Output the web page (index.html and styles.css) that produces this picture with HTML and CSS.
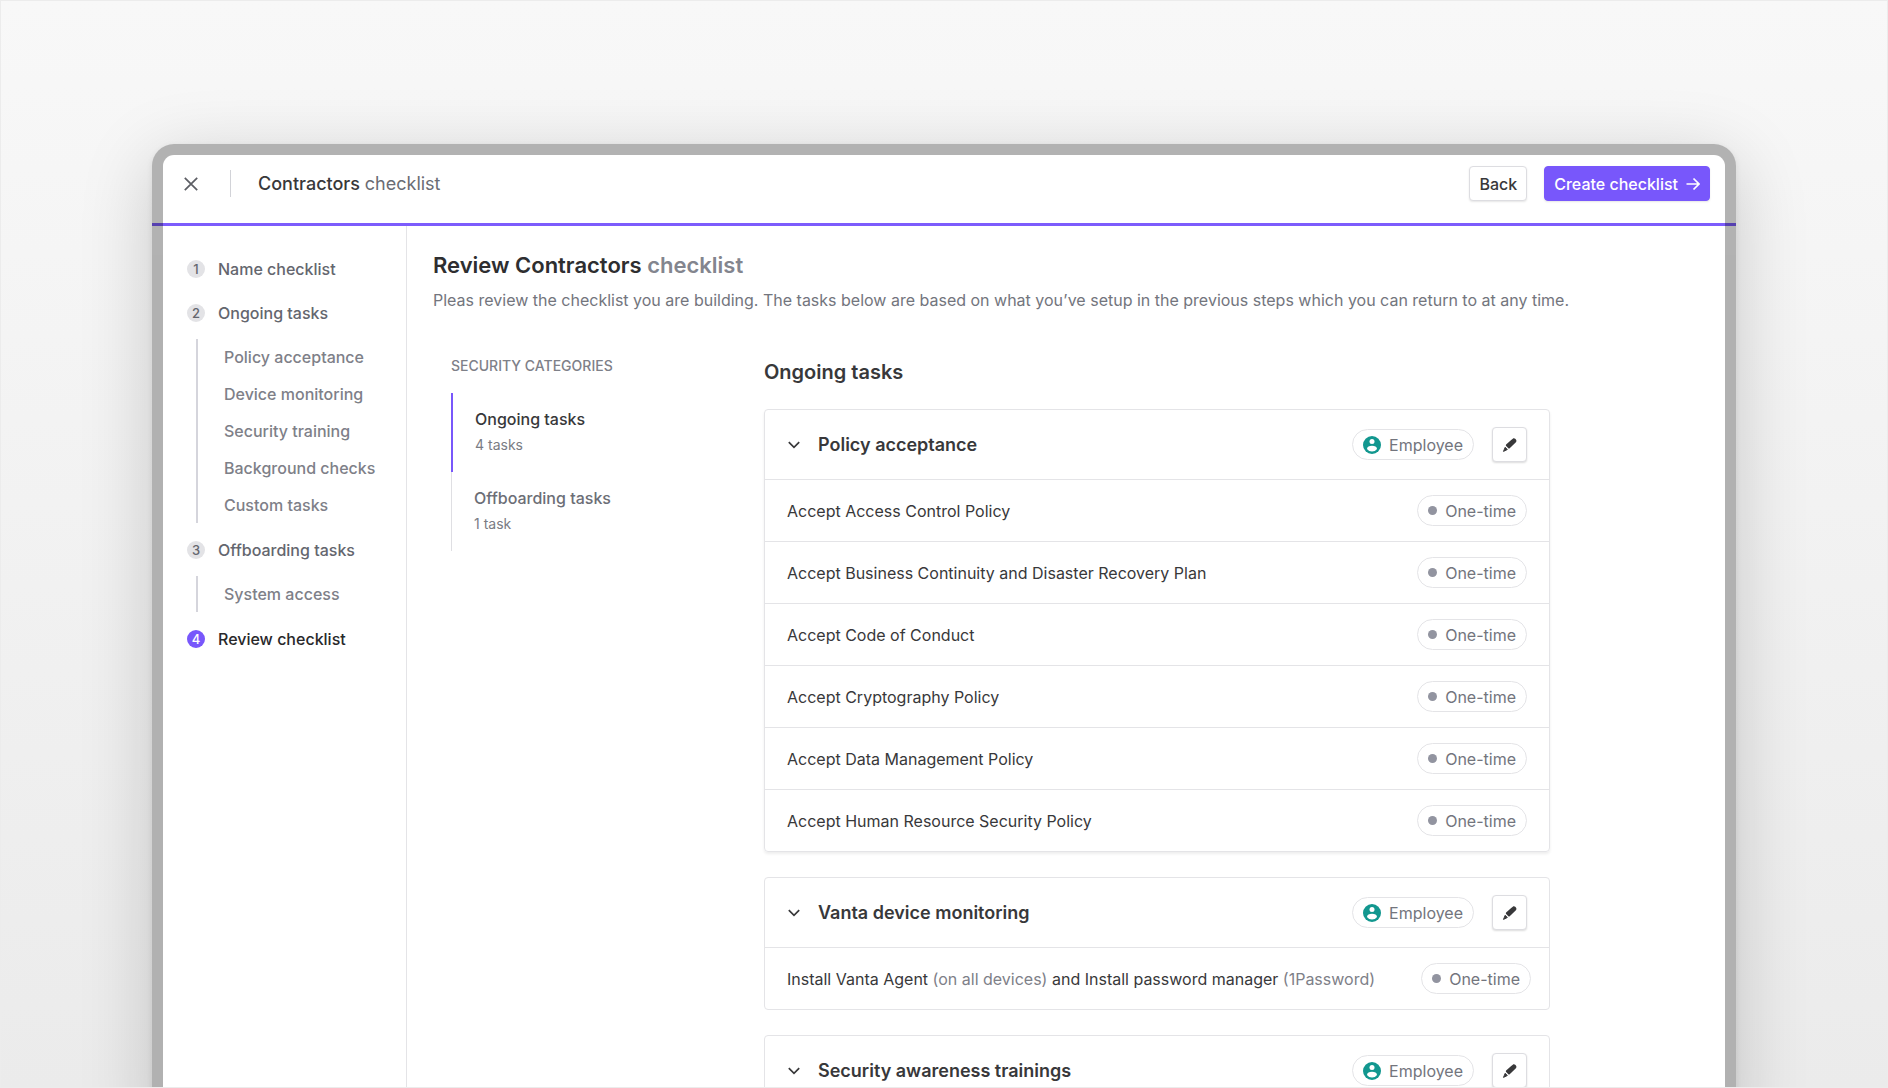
FILE: index.html
```html
<!DOCTYPE html>
<html lang="en">
<head>
<meta charset="utf-8">
<meta name="viewport" content="width=device-width, initial-scale=1">
<title>Contractors checklist</title>
<link rel="stylesheet" href="styles.css">
</head>
<body>
<svg class="sprite" aria-hidden="true">
  <symbol id="chevron" viewBox="0 0 14 14"><path d="M1.8 4.2 7 9.4l5.2-5.2" fill="none" stroke="currentColor" stroke-width="1.7"/></symbol>
  <symbol id="person" viewBox="0 0 18 18"><circle cx="9" cy="9" r="9" fill="#12978f"/><circle cx="9" cy="5.6" r="2.5" fill="#fff"/><path d="M4 13c0-2 2.300-3.200 5-3.200s5 1.200 5 3.200c-1.200 1.700-3 2.500-5 2.500s-3.800-.8-5-2.500z" fill="#fff"/></symbol>
  <symbol id="pencil" viewBox="0 0 16 16"><path d="M8.900 3.200 10.800 1.700c.8-.7 1.700-.6 2.400.1l.5.500c.9.800 1 2 .2 2.900L7.700 11.200c-.4.400-1 .4-1.400 0L4.100 9c-.4-.4-.4-1 0-1.400z" fill="currentColor"/><path d="M3.200 10.300 5.300 12.500 1.500 14.400z" fill="currentColor" stroke="currentColor" stroke-width="1" stroke-linejoin="round"/></symbol>
</svg>
<div class="stage">
  <div class="device">
    <header class="topbar">
      <button class="close" type="button" aria-label="Close"><svg width="14" height="14" viewBox="0 0 14 14"><path d="M.8.8l12.400 12.400M13.200.8.8 13.200" fill="none" stroke="currentColor" stroke-width="1.700"/></svg></button>
      <span class="divider"></span>
      <div class="topbar-title">Contractors <span>checklist</span></div>
      <div class="actions">
        <button class="btn" type="button">Back</button>
        <button class="btn btn-primary" type="button">Create checklist <svg width="14" height="14" viewBox="0 0 14 14"><path d="M.5 7h12.300M7.500 1.500 13 7l-5.500 5.500" fill="none" stroke="currentColor" stroke-width="1.700"/></svg></button>
      </div>
    </header>
    <div class="body">
      <nav class="steps" aria-label="Steps">
        <a class="step" href="#"><span class="num">1</span>Name checklist</a>
        <a class="step" href="#"><span class="num">2</span>Ongoing tasks</a>
        <div class="substeps">
          <a href="#">Policy acceptance</a>
          <a href="#">Device monitoring</a>
          <a href="#">Security training</a>
          <a href="#">Background checks</a>
          <a href="#">Custom tasks</a>
        </div>
        <a class="step" href="#"><span class="num">3</span>Offboarding tasks</a>
        <div class="substeps">
          <a href="#">System access</a>
        </div>
        <a class="step current" href="#"><span class="num">4</span>Review checklist</a>
      </nav>
      <main class="main">
        <h1>Review Contractors <span>checklist</span></h1>
        <p class="lead">Pleas review the checklist you are building. The tasks below are based on what you’ve setup in the previous steps which you can return to at any time.</p>
        <div class="columns">
          <nav class="cats" aria-label="Security categories">
            <h2>SECURITY CATEGORIES</h2>
            <a class="cat selected" href="#">Ongoing tasks<small>4 tasks</small></a>
            <a class="cat" href="#">Offboarding tasks<small>1 task</small></a>
          </nav>
          <section class="tasks">
            <h2>Ongoing tasks</h2>
            <section class="card raised">
              <header class="card-head">
                <svg class="chev" width="14" height="14"><use href="#chevron"/></svg>
                <h3>Policy acceptance</h3>
                <span class="pill"><svg width="18" height="18"><use href="#person"/></svg>Employee</span>
                <button class="edit" type="button" aria-label="Edit"><svg width="16" height="16"><use href="#pencil"/></svg></button>
              </header>
              <div class="row"><span>Accept Access Control Policy</span><span class="pill"><i></i>One-time</span></div>
              <div class="row"><span>Accept Business Continuity and Disaster Recovery Plan</span><span class="pill"><i></i>One-time</span></div>
              <div class="row"><span>Accept Code of Conduct</span><span class="pill"><i></i>One-time</span></div>
              <div class="row"><span>Accept Cryptography Policy</span><span class="pill"><i></i>One-time</span></div>
              <div class="row"><span>Accept Data Management Policy</span><span class="pill"><i></i>One-time</span></div>
              <div class="row"><span>Accept Human Resource Security Policy</span><span class="pill"><i></i>One-time</span></div>
            </section>
            <section class="card">
              <header class="card-head">
                <svg class="chev" width="14" height="14"><use href="#chevron"/></svg>
                <h3>Vanta device monitoring</h3>
                <span class="pill"><svg width="18" height="18"><use href="#person"/></svg>Employee</span>
                <button class="edit" type="button" aria-label="Edit"><svg width="16" height="16"><use href="#pencil"/></svg></button>
              </header>
              <div class="row row-wide"><span>Install Vanta Agent <em>(on all devices)</em> and Install password manager <em>(1Password)</em></span><span class="pill"><i></i>One-time</span></div>
            </section>
            <section class="card">
              <header class="card-head">
                <svg class="chev" width="14" height="14"><use href="#chevron"/></svg>
                <h3>Security awareness trainings</h3>
                <span class="pill"><svg width="18" height="18"><use href="#person"/></svg>Employee</span>
                <button class="edit" type="button" aria-label="Edit"><svg width="16" height="16"><use href="#pencil"/></svg></button>
              </header>
            </section>
          </section>
        </div>
      </main>
    </div>
  </div>
</div>
</body>
</html>
```
FILE: styles.css
```css
* { box-sizing: border-box; }
body {
  margin: 0;
  font: 400 16px/20px Inter, "Liberation Sans", sans-serif;
  color: #38383a;
}
h1, h2, h3, p { margin: 0; }
a { color: inherit; text-decoration: none; }
button { font: inherit; color: inherit; cursor: pointer; }
.sprite { display: none; }

.stage {
  height: 100vh;
  overflow: hidden;
  padding: 143px 151px 0;
  border: 1px solid #ececec;
  background: linear-gradient(#f8f8f8, #ebebeb);
}
.device {
  position: relative;
  display: flex;
  flex-direction: column;
  min-height: 100%;
  padding: 11px 0 0;
  border-radius: 22px 22px 0 0;
  background: #fff;
  box-shadow: 0 2px 6px rgba(0, 0, 0, .08), 0 16px 72px rgba(0, 0, 0, .18);
}
/* translucent bezel laid over the app */
.device::after {
  content: "";
  position: absolute;
  inset: 0;
  border: 11px solid rgba(0, 0, 0, .3);
  border-bottom: 0;
  border-radius: 22px 22px 0 0;
  pointer-events: none;
}

.topbar {
  display: flex;
  align-items: center;
  height: 71px;
  padding: 0 26px 11px 32px;
  border-bottom: 3px solid #7c5cfc;
}
.close { display: flex; padding: 0; border: 0; background: none; color: #5c5e64; }
.divider { width: 1px; height: 27px; margin: 0 27px 0 32px; background: #d2d3d8; }
.topbar-title { font-size: 18px; font-weight: 500; }
.topbar-title span { color: #6a6c74; font-weight: 400; }
.actions { display: flex; gap: 17px; margin-left: auto; }
.btn {
  display: flex;
  align-items: center;
  gap: 8px;
  height: 35px;
  padding: 0 9px;
  border: 1px solid #dddde1;
  border-radius: 4px;
  background: #fff;
  font-weight: 500;
  box-shadow: 0 1px 2px rgba(0, 0, 0, .1);
}
.btn-primary { border-color: #7857fb; background: #7857fb; color: #fff; }

.body { display: flex; flex: 1; padding: 0 11px; }
.steps {
  display: flex;
  flex-direction: column;
  gap: 9px;
  flex: 0 0 244px;
  padding: 25px 0 0 24px;
  border-right: 1px solid #e4e4e7;
  font-weight: 500;
}
.step { display: flex; align-items: center; gap: 13px; height: 35px; color: #64666e; }
.num {
  width: 18px;
  height: 18px;
  border-radius: 50%;
  background: #e3e3e6;
  font-size: 13px;
  line-height: 18px;
  text-align: center;
}
.current { color: #28282a; }
.current .num { background: #7857fb; color: #fff; }
.substeps {
  display: flex;
  flex-direction: column;
  gap: 1px;
  margin-left: 9px;
  padding-left: 26px;
  border-left: 2px solid #d5d5dc;
  color: #7e8088;
  line-height: 36px;
}

.main { flex: 1; padding: 25px 26px 0; }
h1 { font-size: 22px; line-height: 28px; font-weight: 600; color: #2e2e30; }
h1 span { color: #83858e; }
.lead { margin-top: 11px; color: #73757d; }
.columns { display: flex; padding-top: 47px; }
.cats { flex: 0 0 331px; padding-left: 18px; }
.cats h2 { margin: 0 0 18px; font-size: 14px; line-height: 18px; font-weight: 500; color: #7e8088; }
.cat {
  display: flex;
  flex-direction: column;
  gap: 6px;
  height: 79px;
  padding: 16px 0 0 22px;
  border-left: 1px solid #dfdfe3;
  font-weight: 500;
  color: #6c6e76;
}
.selected { border-left: 2px solid #7857fb; color: #38383a; }
.cat small { font-size: 14px; font-weight: 400; color: #7a7c84; }
.tasks { flex: 0 1 786px; padding-top: 3px; }
.tasks h2 { margin-bottom: 25px; font-size: 20px; line-height: 24px; font-weight: 600; }
.card {
  margin-bottom: 25px;
  border: 1px solid #e4e4e7;
  border-radius: 4px;
}
.raised { box-shadow: 0 2px 3px rgba(0, 0, 0, .07); }
.card-head { display: flex; align-items: center; height: 69px; padding: 0 22px; }
.chev { margin-right: 17px; }
.card-head h3 { margin-right: auto; font-size: 18px; font-weight: 600; }
.pill {
  display: flex;
  align-items: center;
  gap: 8px;
  height: 31px;
  padding: 0 10px;
  border: 1px solid #e4e4e7;
  border-radius: 16px;
  color: #73757d;
}
.pill i { width: 9px; height: 9px; border-radius: 50%; background: #9294a0; }
.edit {
  display: flex;
  align-items: center;
  justify-content: center;
  width: 35px;
  height: 35px;
  margin-left: 18px;
  padding: 0;
  border: 1px solid #dddde1;
  border-radius: 4px;
  background: #fff;
  box-shadow: 0 1px 2px rgba(0, 0, 0, .14);
}
.row {
  display: flex;
  align-items: center;
  justify-content: space-between;
  height: 62px;
  padding: 0 22px;
  border-top: 1px solid #e4e4e7;
}
.row-wide { padding-right: 18px; }
.row em { font-style: normal; color: #7e8088; }
```
